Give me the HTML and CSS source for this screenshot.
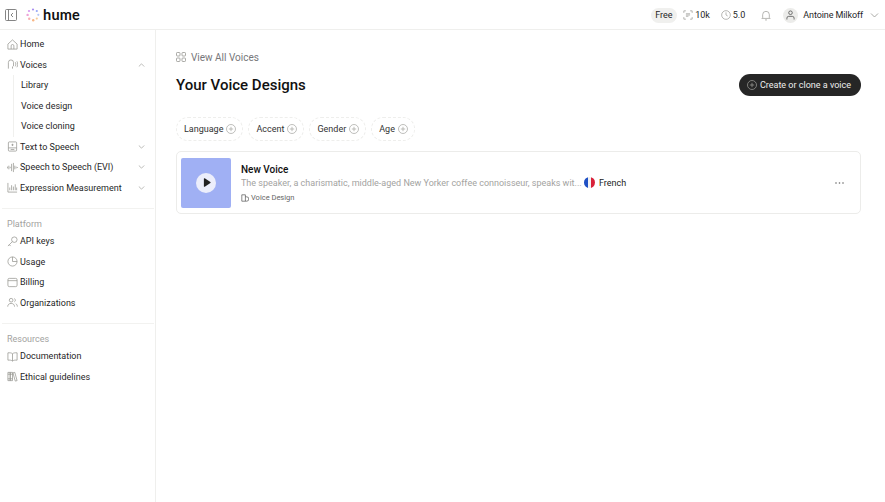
FILE: index.html
```html
<!DOCTYPE html>
<html>
  <head>
    <title>Your Voice Designs</title>
    <link rel="stylesheet" href="styles.css">
  </head>
  <body>
    <header class="topbar">
      <div class="brand">
        <svg class="collapse-icon" width="12" height="12" viewBox="0 0 12 12"><rect x="0.5" y="0.5" width="11" height="11" rx="1"/><path d="M3.5 0.5v11M8 4L6 6l2 2"/></svg>
        <svg class="logo" width="14" height="14" viewBox="0 0 14 14">
          <circle cx="7" cy="1.5" r="1.1" fill="#a98ff0"/><circle cx="10.8" cy="3" r="1.1" fill="#94a6f5"/><circle cx="12.3" cy="6.8" r="1.1" fill="#b5c8f5"/><circle cx="10.8" cy="10.6" r="1.1" fill="#f6cd98"/><circle cx="7.2" cy="12.3" r="1.2" fill="#f8b685"/><circle cx="3.2" cy="10.8" r="1.2" fill="#f7aeb4"/><circle cx="1.6" cy="6.9" r="1.2" fill="#eea2d8"/><circle cx="3" cy="3" r="1.1" fill="#d596f0"/>
        </svg>
        <span class="wordmark">hume</span>
      </div>
      <div class="account">
        <span class="plan">Free</span>
        <span class="stat">
          <svg class="icon" width="10" height="10" viewBox="0 0 12 12"><path d="M1 3.500V1h2.500M8.500 1H11v2.500M11 8.500V11H8.500M3.500 11H1V8.500M3.500 4.500h5M3.500 6h5M3.500 7.500h3"/></svg>
          10k
        </span>
        <span class="stat clock">
          <svg class="icon" width="10" height="10" viewBox="0 0 12 12"><circle cx="6" cy="6" r="5.200"/><path d="M6 2.800V6l2 1.200"/></svg>
          5.0
        </span>
        <svg class="icon bell" width="10" height="11" viewBox="0 0 12 13"><path d="M2 9V5.500a4 4 0 0 1 8 0V9l1 1H1zM4.800 11.800h2.400"/></svg>
        <span class="avatar">
          <svg class="icon dark" width="9" height="10" viewBox="0 0 10 11"><circle cx="5" cy="3" r="2"/><path d="M1 10.500V9a2 2 0 0 1 2-2h4a2 2 0 0 1 2 2v1.500"/></svg>
        </span>
        <span class="user-name">Antoine Milkoff</span>
        <svg class="icon chevron" width="9" height="5" viewBox="0 0 9 5"><path d="M1 0.500l3.500 3.500L8 0.500"/></svg>
      </div>
    </header>

    <div class="layout">
      <nav class="sidebar">
        <div class="nav-group">
          <a class="nav-item">
            <svg class="icon" width="11" height="11" viewBox="0 0 12 12"><path d="M1 11V5.500L6 1l5 4.500V11zM4.500 11V7.500a1.500 1.500 0 0 1 3 0V11"/></svg>
            Home
          </a>
          <a class="nav-item">
            <svg class="icon" width="11" height="11" viewBox="0 0 12 12"><path d="M1.500 10.500V3.800a2.800 2.800 0 0 1 5.600 0v3.700L6 8.500v2M9 3.500c.8 1.300.8 3 0 4.500M10.800 2.500c1.200 2 1.200 4.500 0 6.500"/></svg>
            Voices
            <svg class="icon chevron-end" width="7" height="4" viewBox="0 0 9 5"><path d="M1 4.500L4.500 1 8 4.500"/></svg>
          </a>
          <div class="subnav">
            <a class="nav-item sub-item">Library</a>
            <a class="nav-item sub-item">Voice design</a>
            <a class="nav-item sub-item">Voice cloning</a>
          </div>
          <a class="nav-item">
            <svg class="icon" width="11" height="11" viewBox="0 0 12 12"><rect x="1.500" y="1" width="9" height="10" rx="1"/><path d="M1.500 7.500h9M6 3v2.500M4.800 4.200h2.400M4 9.300h4"/></svg>
            Text to Speech
            <svg class="icon chevron-end" width="7" height="4" viewBox="0 0 9 5"><path d="M1 0.500l3.500 3.500L8 0.500"/></svg>
          </a>
          <a class="nav-item">
            <svg class="icon" width="11" height="11" viewBox="0 0 12 12"><path d="M0.500 5v2M2 4v4M3.500 5.200v1.600M5 2v8M7 1v10M8.500 4v4M10 5v2M11.500 5.500v1"/></svg>
            Speech to Speech (EVI)
            <svg class="icon chevron-end" width="7" height="4" viewBox="0 0 9 5"><path d="M1 0.500l3.500 3.500L8 0.500"/></svg>
          </a>
          <a class="nav-item">
            <svg class="icon" width="11" height="11" viewBox="0 0 12 12"><path d="M1 1v10h10M3 9V6M5 9V3.500M7 9V5M9 9V2.500M10.500 9V6"/></svg>
            Expression Measurement
            <svg class="icon chevron-end" width="7" height="4" viewBox="0 0 9 5"><path d="M1 0.500l3.500 3.500L8 0.500"/></svg>
          </a>
        </div>

        <div class="nav-group ruled">
          <div class="nav-label">Platform</div>
          <a class="nav-item">
            <svg class="icon" width="11" height="11" viewBox="0 0 12 12"><circle cx="8" cy="4" r="3"/><path d="M5.800 6.200L1 11M2.500 9.500L4 11"/></svg>
            API keys
          </a>
          <a class="nav-item">
            <svg class="icon" width="11" height="11" viewBox="0 0 12 12"><circle cx="6" cy="6" r="5"/><path d="M6 1v5h5"/></svg>
            Usage
          </a>
          <a class="nav-item">
            <svg class="icon" width="11" height="11" viewBox="0 0 12 12"><rect x="1" y="1.500" width="10" height="9" rx="1.500"/><path d="M1 4h10"/></svg>
            Billing
          </a>
          <a class="nav-item">
            <svg class="icon" width="11" height="11" viewBox="0 0 12 12"><circle cx="4.500" cy="3.500" r="2"/><path d="M0.800 10.500c0-2.200 1.500-3.500 3.700-3.500s3.700 1.300 3.700 3.500M8 1.700a2 2 0 0 1 0 3.600M9.500 7.300c1.100.6 1.800 1.700 1.800 3.200"/></svg>
            Organizations
          </a>
        </div>

        <div class="nav-group ruled">
          <div class="nav-label">Resources</div>
          <a class="nav-item">
            <svg class="icon" width="11" height="11" viewBox="0 0 12 12"><path d="M6 3c-1-1-3-1.200-5-1v8c2-.2 4 0 5 1 1-1 3-1.200 5-1V2c-2-.2-4 0-5 1zM6 3v8"/></svg>
            Documentation
          </a>
          <a class="nav-item">
            <svg class="icon" width="11" height="11" viewBox="0 0 12 12"><path d="M1 1.500h2.500v9H1zM3.500 1.500H6v9H3.500zM6.500 2l2-.5 2.500 9-2 .5zM1 8.500h5M1 3.500h5"/></svg>
            Ethical guidelines
          </a>
        </div>
      </nav>

      <main class="content">
        <a class="back-link">
          <svg class="icon" width="10" height="10" viewBox="0 0 10 10"><rect x="0.500" y="0.500" width="3.500" height="3.500" rx="0.800"/><rect x="6" y="0.500" width="3.500" height="3.500" rx="0.800"/><rect x="0.500" y="6" width="3.500" height="3.500" rx="0.800"/><rect x="6" y="6" width="3.500" height="3.500" rx="0.800"/></svg>
          View All Voices
        </a>
        <div class="title-row">
          <h1 class="page-title">Your Voice Designs</h1>
          <button class="primary-button">
            <svg class="plus-icon" width="10" height="10" viewBox="0 0 10 10"><circle cx="5" cy="5" r="4.500"/><path d="M5 2.800v4.400M2.800 5h4.400"/></svg>
            Create or clone a voice
          </button>
        </div>
        <div class="filters">
          <button class="filter">Language <svg class="plus-icon" width="10" height="10" viewBox="0 0 10 10"><circle cx="5" cy="5" r="4.500"/><path d="M5 2.800v4.400M2.800 5h4.400"/></svg></button>
          <button class="filter">Accent <svg class="plus-icon" width="10" height="10" viewBox="0 0 10 10"><circle cx="5" cy="5" r="4.500"/><path d="M5 2.800v4.400M2.800 5h4.400"/></svg></button>
          <button class="filter">Gender <svg class="plus-icon" width="10" height="10" viewBox="0 0 10 10"><circle cx="5" cy="5" r="4.500"/><path d="M5 2.800v4.400M2.800 5h4.400"/></svg></button>
          <button class="filter">Age <svg class="plus-icon" width="10" height="10" viewBox="0 0 10 10"><circle cx="5" cy="5" r="4.500"/><path d="M5 2.800v4.400M2.800 5h4.400"/></svg></button>
        </div>
        <article class="voice-card">
          <div class="thumb">
            <span class="play">
              <svg width="8" height="9" viewBox="0 0 9 10"><path d="M1 0.800c0-.5.500-.8 1-.5l6.300 4.100c.4.300.4.900 0 1.200L2 9.700c-.5.300-1 0-1-.5z" fill="#222"/></svg>
            </span>
          </div>
          <div class="voice-info">
            <div class="voice-name">New Voice</div>
            <div class="voice-desc">The speaker, a charismatic, middle-aged New Yorker coffee connoisseur, speaks wit...</div>
            <div class="voice-type">
              <svg class="icon dark" width="8" height="8" viewBox="0 0 10 10"><path d="M1 1h4.500v8H1zM5.500 3.500h1.500a2.500 2.500 0 0 1 0 5.500H5.500"/></svg>
              Voice Design
            </div>
          </div>
          <div class="voice-lang">
            <span class="flag"><i class="flag-blue"></i><i class="flag-white"></i><i class="flag-red"></i></span>
            French
          </div>
          <svg class="more" width="9" height="2" viewBox="0 0 9 2"><circle cx="1" cy="1" r="0.800"/><circle cx="4.500" cy="1" r="0.800"/><circle cx="8" cy="1" r="0.800"/></svg>
        </article>
      </main>
    </div>
  </body>
</html>
```

FILE: styles.css
```css
* {
  box-sizing: border-box;
}

html,
body {
  height: 100%;
}

body {
  margin: 0;
  display: flex;
  flex-direction: column;
  overflow: hidden;
  background: #fff;
  color: #1f1f1f;
  font-family: Roboto, "Noto Sans", sans-serif;
  font-size: 9px;
}

.icon {
  flex: none;
  fill: none;
  stroke: #94948f;
  stroke-width: 0.8;
}

.icon.dark {
  stroke: #444;
}

.plus-icon {
  flex: none;
  fill: none;
  stroke: #a3a39f;
  stroke-width: 0.7;
}

/* top bar */
.topbar {
  flex: none;
  height: 30px;
  display: flex;
  align-items: center;
  justify-content: space-between;
  padding: 0 6px 0 5px;
  border-bottom: 1px solid #efefed;
}

.brand {
  display: flex;
  align-items: center;
}

.collapse-icon {
  fill: none;
  stroke: #777;
  stroke-width: 0.9;
}

.logo {
  margin-left: 9px;
}

.wordmark {
  margin-left: 3px;
  font-family: Lato, sans-serif;
  font-size: 14.500px;
  font-weight: 700;
  letter-spacing: 0.2px;
  color: #111;
}

.account {
  display: flex;
  align-items: center;
  padding-top: 1px;
}

.plan {
  padding: 3px 4.500px;
  border-radius: 10px;
  background: #f0f0ee;
  line-height: 9px;
}

.stat {
  display: flex;
  align-items: center;
  gap: 2px;
  margin-left: 6px;
}

.stat.clock {
  margin-left: 11px;
}

.bell {
  margin-left: 16px;
}

.avatar {
  display: flex;
  align-items: center;
  justify-content: center;
  width: 15px;
  height: 15px;
  margin-left: 12px;
  border-radius: 50%;
  background: #ececea;
}

.user-name {
  margin-left: 5px;
  letter-spacing: -0.1px;
}

.chevron {
  margin-left: 7px;
}

/* sidebar */
.layout {
  flex: 1;
  display: flex;
  min-height: 0;
}

.sidebar {
  flex: none;
  width: 156px;
  padding: 4px 1px 0 2px;
  border-right: 1px solid #efefed;
}

.nav-group.ruled {
  margin-top: 9.500px;
  padding-top: 8.500px;
  border-top: 1px solid #f2f2f0;
}

.nav-label {
  height: 14px;
  padding-left: 5px;
  line-height: 15px;
  color: #a3a39f;
}

.nav-item {
  display: flex;
  align-items: center;
  gap: 2px;
  height: 20.500px;
  padding: 0 9px 0 5px;
}

.chevron-end {
  margin-left: auto;
}

.subnav {
  margin-left: 11px;
  padding-left: 7px;
  border-left: 1px solid #f0f0ee;
}

.sub-item {
  padding-left: 0;
}

/* main area */
.content {
  flex: 1;
  min-width: 0;
  padding: 20px 24px 0 20px;
}

.back-link {
  display: flex;
  align-items: center;
  gap: 5px;
  height: 14px;
  color: #77777a;
  font-size: 10px;
}

.title-row {
  display: flex;
  align-items: center;
  justify-content: space-between;
  margin-top: 10px;
  height: 22px;
}

.page-title {
  margin: 0;
  font-size: 15px;
  font-weight: 500;
  color: #111;
}

.primary-button {
  display: flex;
  align-items: center;
  gap: 3px;
  height: 22px;
  padding: 0 10px 0 8px;
  border: 0;
  border-radius: 11px;
  background: #262626;
  color: #eee;
  font: inherit;
}

.filters {
  display: flex;
  gap: 5px;
  margin-top: 21px;
}

.filter {
  display: flex;
  align-items: center;
  gap: 3px;
  height: 24px;
  padding: 0 6px 0 7px;
  border: 1px dashed #eeeeec;
  border-radius: 12px;
  background: #fff;
  color: #333;
  font: inherit;
}

.voice-card {
  display: flex;
  align-items: center;
  height: 63px;
  margin-top: 10px;
  padding: 0 16px 0 4px;
  border: 1px solid #ececea;
  border-radius: 5px;
}

.thumb {
  flex: none;
  display: flex;
  align-items: center;
  justify-content: center;
  width: 50px;
  height: 50px;
  border-radius: 2px;
  background: #a0b0f4;
}

.play {
  display: flex;
  align-items: center;
  justify-content: center;
  width: 20px;
  height: 20px;
  padding-left: 1px;
  border-radius: 50%;
  background: #eceefb;
}

.voice-info {
  width: 343px;
  margin-left: 10px;
  padding-top: 1px;
}

.voice-name {
  font-size: 10px;
  font-weight: 500;
  color: #111;
}

.voice-desc {
  margin-top: 3px;
  color: #a3a39f;
  white-space: nowrap;
}

.voice-type {
  display: flex;
  align-items: center;
  gap: 2px;
  margin-top: 5px;
  font-size: 7.500px;
  color: #666;
}

.voice-lang {
  display: flex;
  align-items: center;
  gap: 4px;
  color: #222;
}

.flag {
  display: flex;
  width: 11px;
  height: 11px;
  border-radius: 50%;
  overflow: hidden;
}

.flag i {
  flex: 1;
}

.flag-blue {
  background: #1f50c4;
}

.flag-white {
  background: #f2f2f2;
}

.flag-red {
  background: #d8213a;
}

.more {
  margin-left: auto;
  fill: #666;
}
```
